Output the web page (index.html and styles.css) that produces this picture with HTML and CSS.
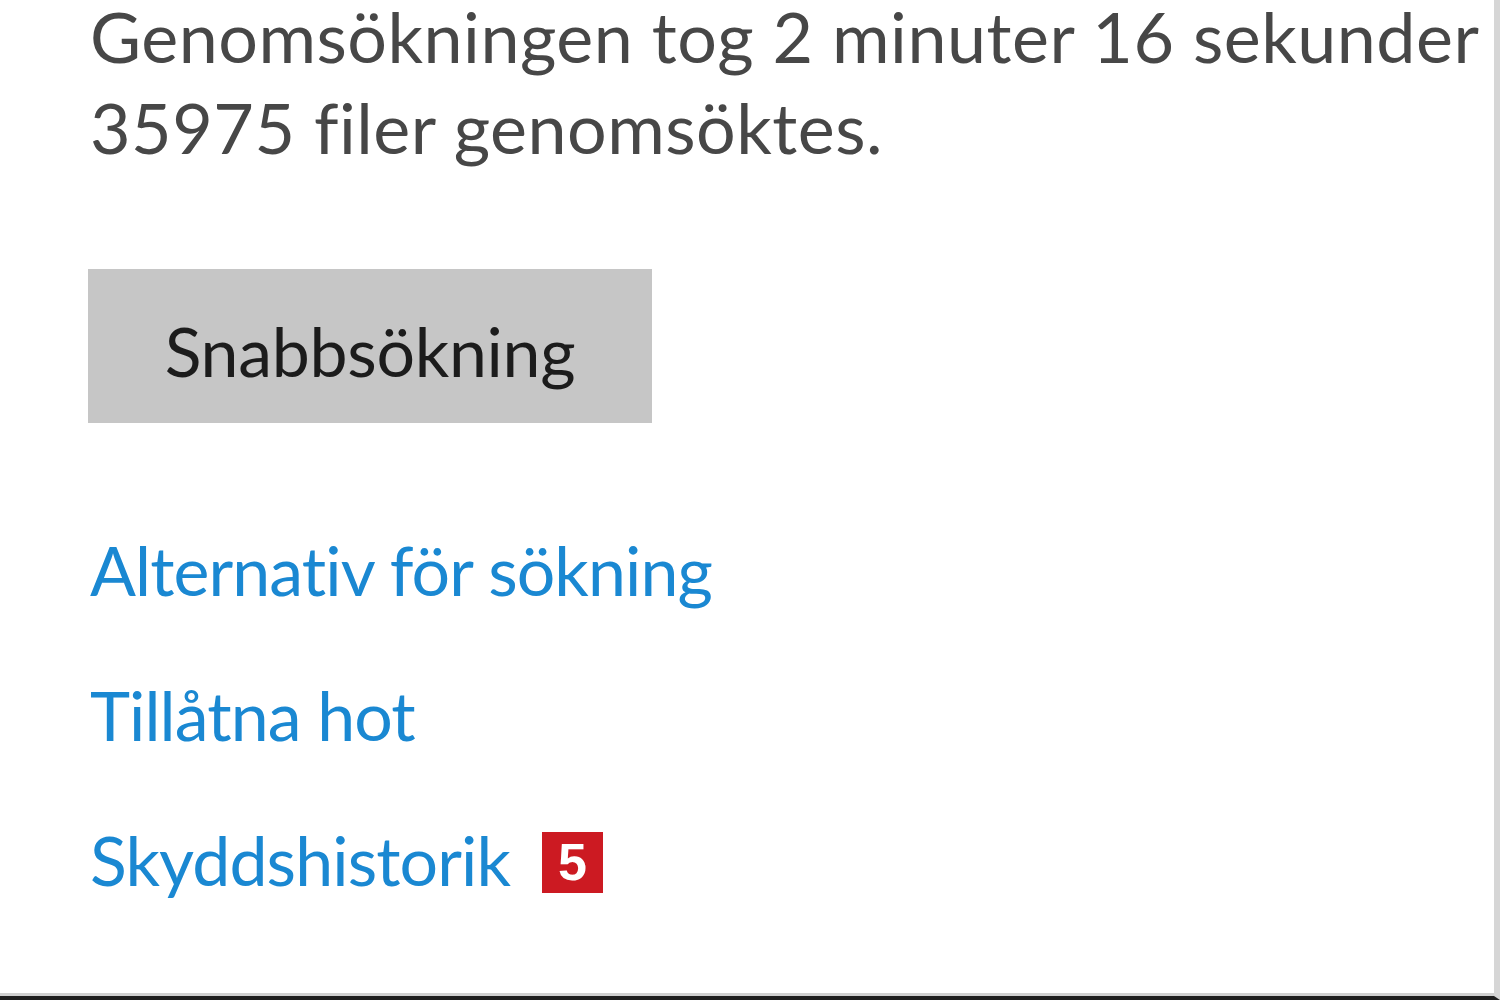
FILE: index.html
```html
<!DOCTYPE html>
<html lang="sv">
<head>
<meta charset="utf-8">
<link rel="stylesheet" href="styles.css">
</head>
<body>
<div class="window">
  <div class="content">
    <p class="summary">Genomsökningen tog 2 minuter 16 sekunder<br>35975 filer genomsöktes.</p>
    <button class="scan-btn">Snabbsökning</button>
    <ul class="links">
      <li><a class="link" href="#">Alternativ för sökning</a></li>
      <li><a class="link" href="#">Tillåtna hot</a></li>
      <li><a class="link" href="#">Skyddshistorik</a><span class="badge">5</span></li>
    </ul>
  </div>
</div>
</body>
</html>
```
FILE: styles.css
```css
html, body {
  margin: 0;
  padding: 0;
  background: #ffffff;
}
.window {
  width: 1500px;
  height: 1000px;
  box-sizing: border-box;
  border-right: 6px solid #d6d6d6;
  border-bottom: 4px solid #1e1e1e;
  box-shadow: inset 0 -3px 0 #d0d0d0;
  overflow: hidden;
  font-family: "Lato", "Open Sans", sans-serif;
  font-variant-ligatures: none;
}
.content {
  padding-left: 90px;
  display: flex;
  flex-direction: column;
  align-items: flex-start;
}
.summary {
  margin: -9px 0 0 0;
  font-size: 70px;
  letter-spacing: 0.5px;
  line-height: 91px;
  color: #474747;
  white-space: nowrap;
}
.scan-btn {
  margin-top: 96px;
  margin-left: -2px;
  width: 564px;
  height: 154px;
  border: none;
  background: #c6c6c6;
  color: #1c1c1c;
  font-family: inherit;
  font-variant-ligatures: none;
  font-size: 68px;
  letter-spacing: -0.3px;
  padding: 8px 0 0 0;
}
.links {
  list-style: none;
  margin: 102px 0 0 0;
  padding: 0;
  display: flex;
  flex-direction: column;
  gap: 55px;
}
.links li {
  display: flex;
  align-items: center;
  gap: 32px;
  height: 90px;
}
.link {
  color: #1a88d2;
  text-decoration: none;
  font-size: 68px;
  letter-spacing: -0.9px;
  line-height: 90px;
}
.badge {
  width: 61px;
  height: 61px;
  margin-top: 4px;
  background: #cc1a22;
  color: #ffffff;
  font-weight: 700;
  font-size: 52px;
  line-height: 61px;
  text-align: center;
  font-family: "Liberation Sans", Arial, sans-serif;
}
```
